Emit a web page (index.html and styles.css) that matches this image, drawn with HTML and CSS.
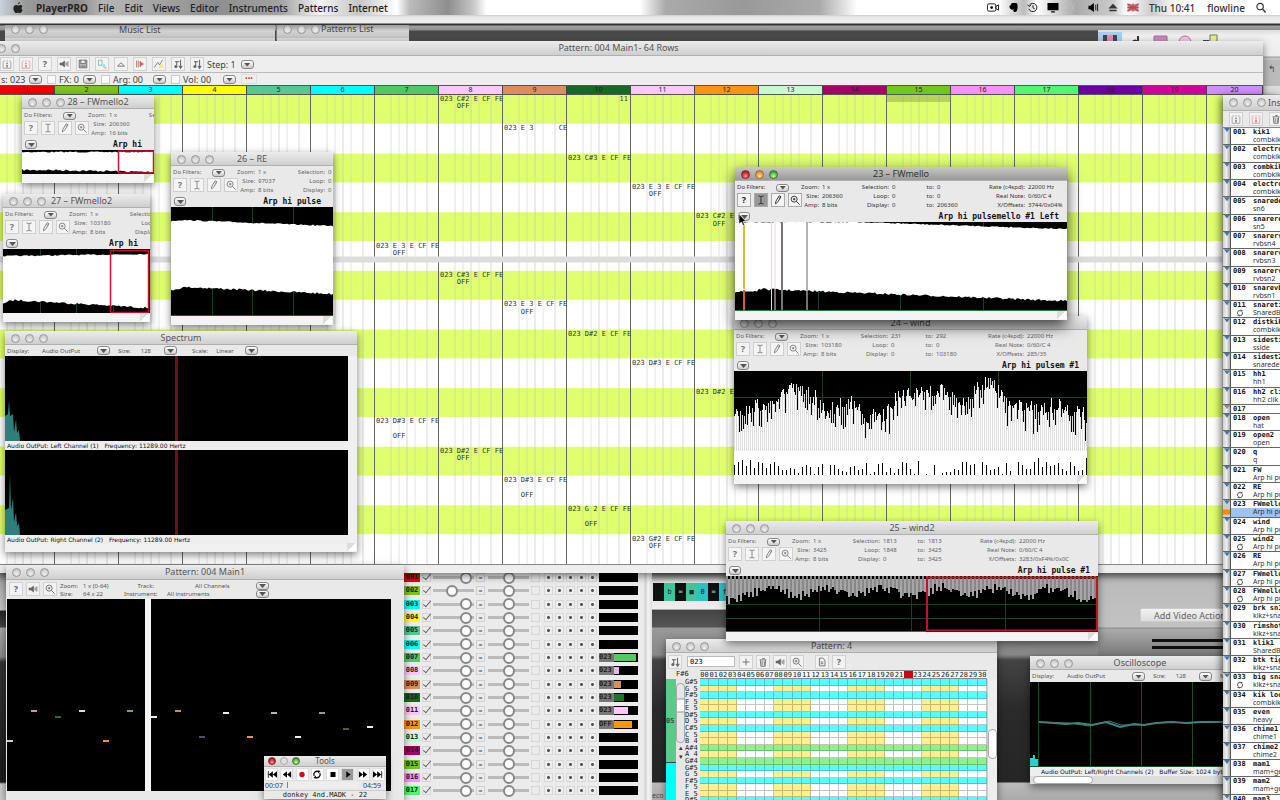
FILE: index.html
```html
<!DOCTYPE html>
<html lang="en">
<head>
<meta charset="utf-8">
<title>PlayerPRO</title>
<link rel="stylesheet" href="styles.css">
</head>
<body>
<svg class="defs" aria-hidden="true">
  <symbol id="i-ibeam" viewBox="0 0 14 14"><path d="M4 2.5h2l1 1 1-1h2M7 3.5v7M4 11.5h2l1-1 1 1h2" fill="none" stroke="currentColor"/></symbol>
  <symbol id="i-pencil" viewBox="0 0 14 14"><path d="M4 11.5l.5-3 4-6.5 2 1.200-4 6.500zM7.500 4l2 1.200" fill="none" stroke="currentColor"/></symbol>
  <symbol id="i-zoom" viewBox="0 0 14 14"><circle cx="6" cy="6" r="3.500" fill="none" stroke="currentColor"/><path d="M8.500 8.500l4 4M6 4.500v3M4.500 6h3" stroke="currentColor" fill="none"/></symbol>
  <symbol id="i-speaker" viewBox="0 0 14 14"><path d="M2 5.500h2.500L8 3v8L4.500 8.500H2z" fill="currentColor"/><path d="M9.500 5v4M11.500 4v6" stroke="currentColor"/></symbol>
  <symbol id="i-trash" viewBox="0 0 14 14"><path d="M3 4.500h8M6 3h3M4 5l.5 7h5l.5-7M6 6v5M8.500 6v5" fill="none" stroke="currentColor"/></symbol>
  <symbol id="i-info" viewBox="0 0 14 14"><path d="M3 3.500h1.500M6 3.500h2M9.500 3.500H11M2.500 4v8h9V4" fill="none" stroke="currentColor" opacity=".6"/><path d="M7 5.500v1.500M7 8v3" stroke="currentColor" stroke-width="1.500"/></symbol>
  <symbol id="i-save" viewBox="0 0 14 14"><path d="M2.500 2.500h9v9h-9zM4.500 2.500v4h5v-4M4 9.500h6" fill="#bbb" stroke="currentColor"/></symbol>
  <symbol id="i-up" viewBox="0 0 14 14"><path d="M3 9.500l4-4 4 4z" fill="none" stroke="currentColor"/></symbol>
  <symbol id="i-note" viewBox="0 0 14 14"><path d="M5.500 10V3.500M3.500 4.500h5M10 2v10M8 9l2 3 2-3" fill="none" stroke="currentColor" stroke-width="1.200"/><circle cx="4.500" cy="10" r="1.800" fill="currentColor"/></symbol>
  <symbol id="i-shapes" viewBox="0 0 14 14"><path d="M3 2.500h4v6H3z" fill="#dff" stroke="#9aa"/><path d="M7.500 7h3v4h-3z" fill="#8ef"/><circle cx="11" cy="11.500" r="1.500" fill="#fb8"/></symbol>
  <symbol id="i-arrows" viewBox="0 0 14 14"><path d="M3 3v8M5 3v8M7 4v6l4-3z" fill="#d67" stroke="#b66"/></symbol>
  <symbol id="i-draw" viewBox="0 0 14 14"><path d="M7 7h5v5H7z" fill="#ee8"/><path d="M1.500 11l4-6 2 3 4-6" fill="none" stroke="#777"/></symbol>
  <symbol id="i-page" viewBox="0 0 14 14"><path d="M4 2.500h4l2.500 2.500v6.500H4zM5.500 7h3M5.500 9h3" fill="none" stroke="currentColor"/></symbol>
  <symbol id="i-plus" viewBox="0 0 14 14"><path d="M7 3v8M3 7h8" stroke="currentColor"/></symbol>
  <symbol id="i-loop" viewBox="0 0 14 14"><path d="M3 9a4.500 4.500 0 0 1 6-6M11 5a4.500 4.500 0 0 1-6 6" fill="none" stroke="currentColor" stroke-width="1.800"/><path d="M7.500 1L12 2 9 5.500zM6.500 13L2 12l3-3.500z" fill="currentColor"/></symbol>
</svg>

<main class="desktop">
  <header class="menubar">
    <svg class="apple" viewBox="0 0 12 12"><path d="M8 0C7.900 1.500 7 2.400 5.900 2.500 5.900 1.200 6.900.2 8 0zM10 6.500c0-1.300 1-1.900 1-1.900-.6-.9-1.500-1.300-2.300-1.300-1 0-1.700.5-2.400.5S4.800 3.400 4 3.400C2.200 3.400 1 5 1 7c0 2.400 1.600 5 3 5 .8 0 1.100-.4 2.100-.4s1.300.4 2 .4c1.200 0 2.200-1.600 2.900-3.100-.8-.4-1-1.300-1-2.400z"/></svg>
    <nav class="menus">
      <button class="app">PlayerPRO</button><button>File</button><button>Edit</button><button>Views</button><button>Editor</button><button>Instruments</button><button>Patterns</button><button>Internet</button>
    </nav>
    <div class="status">
      <svg viewBox="0 0 14 12"><rect x="1" y="2" width="9" height="8" rx="1.500" fill="none" stroke="#111"/><circle cx="5.500" cy="6" r="1.500"/><path d="M10 5l3-2v6l-3-2z" fill="none" stroke="#111"/></svg>
      <svg viewBox="0 0 14 12"><path d="M3 4c2 0 2-3 3-3h4c2 0 2 2 2 4s0 6-3 6c-2 0-2-2-1-3-2 1-5 0-5-4z"/></svg>
      <svg viewBox="0 0 14 12"><path d="M3 3.500a4.500 4.500 0 1 1-.5 4M1 3l2 2 2-2M7 3.500V6.500l2 1" fill="none" stroke="#111"/></svg>
      <svg viewBox="0 0 14 12"><path d="M1 1h12v8H1zM5 10h4v1.500H5z"/></svg>
      <svg viewBox="0 0 14 12"><path d="M5 1l4 9M9 1L5 10" stroke="#bbb"/></svg>
      <svg viewBox="0 0 14 12"><path d="M2 4h2l4-3v10L4 8H2z"/><path d="M10 3v6M12 2v8" stroke="#111"/></svg>
      <svg viewBox="0 0 14 12"><path d="M2 7l5-5 5 5zM3 8.500h8V10H3z" fill="#333"/></svg>
      <svg class="flag" viewBox="0 0 14 12"><path d="M1 2h12v8H1z" fill="#aab"/><path d="M1 2l12 8M13 2L1 10M7 2v8M1 6h12" stroke="#c44" stroke-width="1.500"/></svg>
      <span>Thu 10:41</span><span>flowline</span>
      <svg viewBox="0 0 14 12"><circle cx="6" cy="5" r="3.500" fill="none" stroke="#333" stroke-width="1.300"/><path d="M8.500 7.500l3.500 4" stroke="#333" stroke-width="1.500"/></svg>
    </div>
  </header>
  <div class="backstrip"></div>

  <section class="peek music"><span class="dots"></span><span>Music List</span></section>
  <section class="peek plist"><span class="dots"></span><span>Patterns List</span></section>
  <div class="browser-bar">
    <svg viewBox="0 0 24 10"><path d="M0 0h24v10H0z" fill="#a9cdf0"/><path d="M5 3h14v7H5z" fill="#445"/><path d="M9 3h6v7H9z" fill="#e8a"/></svg>
    <svg viewBox="0 0 24 10"><path d="M8 10q4-5 8 0zM14 4h2v5h-2z" fill="#333"/></svg>
    <svg viewBox="0 0 24 10"><path d="M6 4h13v6H6z" fill="#c8b" stroke="#a69"/></svg>
    <svg viewBox="0 0 24 10"><path d="M6 10a6 6 0 0 1 12 0" fill="#ecd" stroke="#b6a"/></svg>
    <svg viewBox="0 0 24 10"><path d="M5 8h6v2H5z" fill="#444"/><path d="M12 3h7v7h-7z" fill="#ee9" stroke="#585"/></svg>
  </div>
  <div class="side-bar">↰</div>
  <div class="left-back"></div>

  <div class="studio">
    <div class="keys"><i></i><i>b</i><i>=</i><i>■</i><i>0</i><i>=</i><i>f</i></div>
    <div class="studio-dark"><span>eco</span></div>
  </div>
  <div class="video">
    <button>Add Video Action</button>
    <div class="video-lines"></div>
  </div>

  <section class="mixer" id="mixer" aria-label="Track mixer"></section>

  <section class="win pat4">
    <div class="title"><span class="dots"></span>Pattern: 4</div>
    <div class="p4tools">
      <button aria-label="Note"><svg><use href="#i-note"/></svg></button>
      <input aria-label="Instrument" value="023">
      <button aria-label="Add"><svg><use href="#i-plus"/></svg></button>
      <button aria-label="Delete"><svg><use href="#i-trash"/></svg></button>
      <button aria-label="Play"><svg><use href="#i-speaker"/></svg></button>
      <button aria-label="Zoom"><svg><use href="#i-zoom"/></svg></button>
      <button class="later" aria-label="Page"><svg><use href="#i-page"/></svg></button>
      <button>?</button>
    </div>
    <div class="p4head"><span class="p4key">F#6</span><div class="p4nums" id="p4nums"></div></div>
    <div class="p4body">
      <div class="p4tracks"><b>05</b><i></i></div>
      <div class="p4scroll"><span></span><i>▴</i><i>▾</i></div>
      <div class="p4notes" id="p4notes"></div>
      <div class="p4grid" id="p4grid"></div>
      <div class="p4right"><span></span></div>
    </div>
  </section>

  <section class="win osc">
    <div class="title"><span class="dots"></span>Oscilloscope</div>
    <div class="options"><span>Display:</span><span class="opt">Audio OutPut</span><span class="dd"><select aria-label="Display"></select></span><span>Size:</span><span class="num">128</span><span class="dd"><select aria-label="Size"></select></span><span>Mode:</span></div>
    <svg class="osc-view" viewBox="0 0 220 85" preserveAspectRatio="none"><rect width="220" height="85"/><path d="M8.500 0v85M60.500 0v85M111.500 0v85M162.500 0v85M0 84.500h220" stroke="#174f22"/><path d="M0 84V76h3v-3h2v4h3v7z" fill="#2bd0cc"/><path d="M9 40l15 1 12 1 12-1 14 2 14-3 14 5 14-3 10 1 12-2 16-1 14 1 14-1h24" fill="none" stroke="#2e8c86" stroke-width="2"/><path d="M9 40l30 1 20 3 20-5 12 4 20 0 16-2 10-1 26 1" fill="none" stroke="#5c7371"/></svg>
    <div class="caption osc-cap">Audio OutPut: Left/Right Channels (2) &nbsp; Buffer Size: 1024 bytes</div>
    <div class="osc-scroll"><span></span></div>
  </section>

  <section class="win pattern">
    <div class="title"><span class="dots"></span>Pattern: 004 Main1- 64 Rows</div>
    <div class="tools">
      <button aria-label="Info"><svg><use href="#i-info"/></svg></button>
      <button class="red" aria-label="Record"><svg><use href="#i-info"/></svg></button>
      <button>?</button>
      <button aria-label="Sound"><svg><use href="#i-speaker"/></svg></button>
      <button aria-label="Save"><svg><use href="#i-save"/></svg></button>
      <button aria-label="Shapes"><svg><use href="#i-shapes"/></svg></button>
      <button aria-label="Up"><svg><use href="#i-up"/></svg></button>
      <button aria-label="Follow"><svg><use href="#i-arrows"/></svg></button>
      <button aria-label="Draw"><svg><use href="#i-draw"/></svg></button>
      <button aria-label="Note up"><svg><use href="#i-note"/></svg></button>
      <button class="flat" aria-label="Note down"><svg><use href="#i-note"/></svg></button>
      <span>Step: 1</span><span class="dd"><select aria-label="Step"></select></span>
    </div>
    <div class="fields">
      <span class="f1">s: 023</span><span class="dd"><select aria-label="Ins"></select></span>
      <label><input type="checkbox"><span class="f2">FX: 0</span></label><span class="dd"><select aria-label="FX"></select></span>
      <label><input type="checkbox"><span class="f3">Arg: 00</span></label><span class="dd"><select aria-label="Arg"></select></span>
      <label><input type="checkbox"><span class="f3">Vol: 00</span></label><span class="dd"><select aria-label="Vol"></select></span>
      <button class="rec">•••</button>
    </div>
    <div class="tracks" id="tracks"></div>
    <div class="grid" id="grid"></div>
    <div class="foot"></div>
  </section>

  <div id="samples"></div>

  <section class="win spectrum">
    <div class="title"><span class="dots"></span>Spectrum</div>
    <div class="options"><span>Display:</span><span class="opt">Audio OutPut</span><span class="dd"><select aria-label="Display"></select></span><span>Size:</span><span class="num">128</span><span class="dd"><select aria-label="Size"></select></span><span class="scale">Scale:</span><span class="lin">Linear</span><span class="dd"><select aria-label="Scale"></select></span></div>
    <div class="spec-body">
      <svg viewBox="0 0 342 85" preserveAspectRatio="none"><rect width="342" height="85"/><path d="M0 85V60l3-2 1-14 1 16 3-2 1 18 2-13 1 14 2-3 1 11h327z" fill="#2d7f79"/><path d="M171 0v85" stroke="#6d1018" stroke-width="3"/></svg>
      <div class="caption">Audio OutPut: Left Channel (1) &nbsp; Frequency: 11289.00 Hertz</div>
      <svg viewBox="0 0 342 85" preserveAspectRatio="none"><rect width="342" height="85"/><path d="M0 85V60l4-2 1-34 1 36 2-12 1 24 2-10 1 14 2-3 1 12h327z" fill="#2d7f79"/><path d="M171 0v85" stroke="#6d1018" stroke-width="3"/></svg>
      <div class="caption">Audio OutPut: Right Channel (2) &nbsp; Frequency: 11289.00 Hertz</div>
    </div>
  </section>

  <section class="win instr">
    <div class="title"><span class="dots"></span><span>Instruments List</span></div>
    <div class="itools"><button aria-label="Info"><svg><use href="#i-info"/></svg></button><button class="red" aria-label="Load"><svg><use href="#i-info"/></svg></button><button aria-label="Delete"><svg><use href="#i-trash"/></svg></button></div>
    <div class="ilist" id="ilist"></div>
  </section>

  <section class="win roll">
    <div class="title"><span class="dots"></span>Pattern: 004 Main1</div>
    <div class="rollinfo">
      <button>?</button><button aria-label="Sound"><svg><use href="#i-speaker"/></svg></button><button aria-label="Zoom"><svg><use href="#i-zoom"/></svg></button>
      <div class="rollmeta">
        <span>Zoom:</span><span>1 x (0-64)</span><span class="r">Track:</span><span class="m chan">All Channels</span><span class="dd"><select aria-label="Track"></select></span>
        <span>Size:</span><span>64 x 22</span><span class="r">Instrument:</span><span class="m">All instruments</span><span class="dd"><select aria-label="Instrument"></select></span>
      </div>
    </div>
    <svg class="rollview" id="roll" viewBox="0 0 384 192" preserveAspectRatio="none"></svg>
  </section>

  <section class="win toolswin">
    <div class="title"><span class="dots live"></span>Tools</div>
    <div class="transport">
      <button aria-label="Start"><svg viewBox="0 0 12 12"><path d="M1 2h1v8H1zM7 2v8L2 6zM12 2v8L7 6z"/></svg></button>
      <button aria-label="Back"><svg viewBox="0 0 12 12"><path d="M6 2v8L1 6zM11 2v8L6 6z"/></svg></button>
      <button aria-label="Record"><svg viewBox="0 0 12 12"><circle cx="6" cy="6" r="3.200" fill="#e00012"/></svg></button>
      <button aria-label="Loop"><svg><use href="#i-loop"/></svg></button>
      <button aria-label="Stop"><svg viewBox="0 0 12 12"><path d="M3 3h6v6H3z"/></svg></button>
      <button class="on" aria-label="Play"><svg viewBox="0 0 12 12"><path d="M4 2l5 4-5 4z"/></svg></button>
      <button aria-label="Forward"><svg viewBox="0 0 12 12"><path d="M1 2l5 4-5 4zM6 2l5 4-5 4z"/></svg></button>
      <button aria-label="End"><svg viewBox="0 0 12 12"><path d="M0 2l5 4-5 4zM5 2l5 4-5 4zM10 2h1v8h-1z"/></svg></button>
    </div>
    <div class="time"><span>00:07</span><i></i><span>04:59</span></div>
    <div class="song">donkey 4nd.MADK - 22</div>
  </section>
</main>
<script src="app.js"></script>
</body>
</html>
```
FILE: styles.css
```css
*, *::before, *::after { box-sizing: border-box; }
body { margin: 0; font-family: "Noto Sans", "Open Sans", sans-serif; color: #444; }
button { font: inherit; color: inherit; padding: 0; border: 0; background: none; }
.defs { position: absolute; width: 0; height: 0; }
.desktop { position: relative; height: 100vh; overflow: hidden; background: #9a9a9a; white-space: nowrap; }

/* menu bar */
.menubar { height: 15px; display: flex; align-items: center; justify-content: space-between; padding: 0 12px; font-size: 10px; font-weight: 500; color: #222; background: linear-gradient(90deg, #c9d3dc 0, #999 2%, #8a8a8a 6%, #b5b5b5 8%, #aaa 11%, #8e8e8e 17%, #a3a3a3 22%, #f4f4f4 25%, #c6c6c6 28%, #fff 31%, #bbb 32%, #8e8e8e 35%, #c8c8c8 37%, #fff 38%, #fff 50%, #aaa 52%, #999 58%, #aaa 64%, #fff 67%, #fff 78%, #bbb 80%, #fff 81%, #aaa 84%, #ccc 87%, #fff 88%, #ccc 90%, #fff 92%); }
.menus, .status { display: flex; align-items: center; gap: 10px; }
.menus { flex: 1; padding-left: 12px; }
.app { font-weight: 700; }
.apple { width: 12px; height: 11px; fill: #222; }
.status { gap: 6px; }
.status svg { width: 14px; height: 11px; }
.status span { margin: 0 3px 0 3px; color: #333; }
.backstrip { height: 27px; background: linear-gradient(#ccc 0, #e9e9e9 2px, #ececec 8px, #333 9px, #333 10px, #a2a2a2 11px, #8d8d8d 15px, #484848 16px, #4d4d4d 27px); }
.peek { position: absolute; top: 25px; height: 17px; background: linear-gradient(#999, #d2d2d2 6px, #c6c6c6 12px, #aaa 12px, #ddd 13px); font-size: 9px; line-height: 9px; }
.music { left: 5px; width: 270px; padding-left: 114px; }
.plist { left: 276px; width: 133px; padding-left: 44px; border-left: 1px solid #777; line-height: 7px; }

.dots { position: absolute; left: 6px; top: 3px; width: 9px; height: 9px; border-radius: 50%; border: 1px solid #999; background: radial-gradient(circle at 50% 70%, #eee, #bbb); }
.dots::before, .dots::after { content: ""; position: absolute; left: 13px; top: -1px; width: 9px; height: 9px; border-radius: 50%; border: 1px solid #999; background: radial-gradient(circle at 50% 70%, #eee, #bbb); }
.dots::after { left: 27px; }
.peek .dots { top: 0; }
.live { border-color: #822; background: radial-gradient(circle at 50% 75%, #f99, #c1202c 60%); }
.live::before { border-color: #a62; background: radial-gradient(circle at 50% 75%, #fe9, #dd8433 70%); }
.live::after { border-color: #373; background: radial-gradient(circle at 50% 75%, #cf9, #4b9b3b 70%); }
.toolswin .live::before { border-color: #aaa; background: #ddd; }

.browser-bar { position: absolute; top: 30px; left: 1098px; right: 0; height: 65px; display: flex; align-items: flex-start; gap: 1px; padding-top: 2px; background: linear-gradient(#ddd, #f1f1f1 6px, #eee 26px, #999 27px, #c6c6c6 28px, #bbb); }
.browser-bar svg { width: 24px; height: 10px; }
.side-bar { position: absolute; top: 60px; right: 0; width: 16px; height: 34px; font-size: 9px; padding: 2px 4px; background: #bbb; border-bottom: 8px solid #ddd; }
.left-back { position: absolute; left: 0; top: 572px; bottom: 0; width: 8px; background: linear-gradient(#777 0, #aaa 10px, #ccc 38px, #222 39px, #444 55px, #aaa 56px, #888 85px, #333 90px, #1a1a1a 210px, #ccc 212px); }

/* windows */
.win { position: absolute; display: flex; flex-direction: column; background: #e9e9e9; box-shadow: 0 3px 8px rgba(0, 0, 0, .5); }
.title { position: relative; flex: none; height: 14px; line-height: 14px; font-size: 9px; text-align: center; color: #555; background: linear-gradient(#ececec, #cfcfcf); border-bottom: 1px solid #b0b0b0; overflow: hidden; }
.dd { position: relative; flex: none; display: inline-block; width: 13px; height: 9px; border: 1px solid #888; border-radius: 3px; background: linear-gradient(#fff, #ccc); }
.dd select { appearance: none; position: absolute; inset: 0; width: 100%; height: 100%; padding: 0; border: 0; opacity: 0; }
.dd::after { content: ""; position: absolute; left: 2px; top: 2px; width: 7px; height: 4px; background: #555; clip-path: polygon(0 0, 100% 0, 50% 100%); }
.caption { flex: none; height: 9px; line-height: 9px; padding-left: 2px; font-family: "DejaVu Sans", sans-serif; font-size: 6px; color: #111; background: #eee; overflow: hidden; }
.options { display: flex; align-items: center; height: 11px; padding-left: 2px; gap: 8px; font-size: 6px; color: #555; overflow: hidden; }
.opt { width: 52px; padding-left: 5px; }
.num { padding: 0 5px 0 2px; }
.scale { margin-left: 7px; }
.lin { width: 20px; margin-right: 1px; }

/* main pattern window */
.pattern { left: 0; right: 17px; top: 41px; }
.pattern .title { height: 15px; line-height: 14px; padding-right: 26px; }
.pattern .dots { left: -3px; }
.pattern .dots::after { display: none; }
.tools { display: flex; align-items: center; height: 17px; gap: 5px; font-size: 9px; border-bottom: 1px solid #bbb; background: #eee; }
.tools button, .p4tools button, .itools button, .rollinfo button { flex: none; width: 14px; height: 14px; display: grid; place-items: center; font-size: 9px; line-height: 12px; font-weight: 700; border: 1px solid #d2d2d2; background: #f2f2f2; color: #666; }
.tools svg, .p4tools svg, .itools svg, .rollinfo svg { width: 12px; height: 12px; }
.tools .red, .itools .red { color: #c66; }
.tools .flat { margin-right: -2px; }
.fields { display: flex; align-items: center; height: 12px; font-size: 9px; line-height: 11px; padding-left: 1px; background: #eee; }
.fields .dd, .fields label { margin-right: 5px; }
.fields label { display: flex; align-items: center; gap: 3px; margin-right: 0; }
.fields input { appearance: none; width: 9px; height: 9px; margin: 0; border: 1px solid #ccc; background: #fafafa; }
.f1 { width: 28px; }
.f2 { width: 24px; }
.f3 { width: 40px; }
.rec { width: 16px; height: 10px; line-height: 8px; font-size: 7px; color: #c33; border: 1px solid #ddd; }
.tracks, .grid { display: grid; grid-template-columns: 55px repeat(18, 64px) 1fr; }
.tracks { height: 10px; border: solid #555; border-width: 1px 0; }
.tracks span { font-size: 7px; line-height: 8px; text-align: center; color: #222; border-right: 1px solid #444; }
.grid { height: 469px; grid-template-rows: repeat(64, 1fr); position: relative; background:
  linear-gradient(transparent 161px, #ddd 162px, #ddd 167px, transparent 168px),
  repeating-linear-gradient(90deg, transparent 0, transparent 15px, rgba(190,190,200,.25) 15px, rgba(190,190,200,.25) 17px, transparent 17px, transparent 23px, rgba(190,190,200,.2) 23px, rgba(190,190,200,.2) 25px, transparent 25px, transparent 31px, rgba(190,190,200,.3) 31px, rgba(190,190,200,.3) 33px, transparent 33px, transparent 39px, rgba(190,190,200,.2) 39px, rgba(190,190,200,.2) 41px, transparent 41px, transparent 51px, rgba(190,190,200,.3) 51px, rgba(190,190,200,.3) 53px, transparent 53px, transparent 63px, #666 63px, #666 64px) -9px 0 / 1300px 100%,
  linear-gradient(#dfff6c 50%, #fff 50%) 0 0 / 100% 12.5%; }
.cell { height: 0; font: 7px/8px "DejaVu Sans Mono", "Liberation Mono", monospace; color: #333; padding-left: 1px; white-space: pre; }
.cell.end { text-align: right; padding-right: 3px; }
.playing { background: rgba(120, 150, 60, .4); }
.foot { height: 9px; background: #eee; border-top: 1px solid #888; }

/* sample editors */
.s28 { left: 22px; top: 95px; width: 132px; }
.s27 { left: 3px; top: 194px; width: 147px; }
.s26 { left: 171px; top: 152px; width: 162px; }
.s24 { left: 734px; top: 316px; width: 353px; }
.s23 { left: 735px; top: 167px; width: 332px; box-shadow: 0 6px 14px rgba(0, 0, 0, .75); }
.s25 { left: 726px; top: 521px; width: 372px; }
.s28 .title { padding-left: 20px; }
.s27 .title { padding-left: 10px; }
.s23 .title { background: linear-gradient(#c8c8c8, #999); color: #333; }
.info { display: grid; grid-template-columns: 61px 18px 36px 28px 32px 7px 36px 49px 60px; column-gap: 3px; height: 29px; padding: 2px 0 0 2px; font-size: 6px; line-height: 9px; overflow: hidden; color: #666; }
.s23 .info { color: #333; }
.lab { text-align: right; display: flex; flex-direction: column; align-items: flex-end; }
.val { display: flex; flex-direction: column; }
.filters { display: flex; align-items: center; height: 9px; gap: 11px; }
.filters .dd { height: 8px; }
.filters .dd::after { top: 1px; }
.ibtns { display: flex; gap: 3px; padding-top: 1px; }
.ibtns button { flex: none; width: 14px; height: 14px; display: grid; place-items: center; font-size: 9px; font-weight: 700; line-height: 12px; border: 1px solid #d0d0d0; background: #f4f4f4; color: #777; }
.s23 .ibtns button { color: #222; border-color: #aaa; }
.s23 .ibtns .pick { background: #999; }
.ibtns svg { width: 12px; height: 12px; }
.name { display: flex; align-items: flex-end; justify-content: space-between; height: 12px; padding: 0 8px 1px 3px; font: 700 8px/9px "DejaVu Sans Mono", monospace; color: #111; }
.name .dd { width: 12px; }
.s28 .name, .s27 .name, .s26 .name { padding-right: 12px; }
.view { display: block; width: 100%; }
.grow { position: relative; height: 9px; background: #f4f4f4; }
.grow::after, .spectrum::after { content: ""; position: absolute; right: 1px; bottom: 1px; width: 9px; height: 8px; background: linear-gradient(135deg, #ddd 50%, #fff 50%); }
.pointer { position: absolute; left: 3px; top: 46px; width: 9px; height: 13px; }

/* spectrum */
.spectrum { left: 5px; top: 331px; width: 352px; padding-bottom: 8px; background: #f0f0f0; }
.spectrum .options { background: #e9e9e9; }
.spec-body { padding-right: 9px; }
.spec-body svg { display: block; width: 100%; height: 85px; }

/* piano roll */
.roll { left: 6px; top: 565px; width: 398px; bottom: 0; }
.roll .title { height: 15px; }
.rollinfo { display: flex; gap: 3px; padding: 2px 0 0 3px; height: 19px; font-size: 6px; color: #555; }
.rollmeta { display: grid; grid-template-columns: 20px 38px 30px 96px 14px; grid-auto-rows: 8px; line-height: 8px; column-gap: 3px; }
.rollmeta .dd { height: 8px; }
.rollmeta .dd::after { top: 1px; }
.rollmeta .r { text-align: right; }
.rollmeta .m { padding-left: 10px; }
.rollmeta .chan { padding-left: 38px; }
.rollview { width: calc(100% - 14px); height: 192px; margin-left: 1px; }
.toolswin { left: 264px; top: 756px; width: 122px; }
.toolswin .title { height: 11px; line-height: 10px; font-size: 8px; }
.toolswin .dots { top: 1px; left: 4px; width: 8px; height: 8px; }
.toolswin .dots::before, .toolswin .dots::after { width: 8px; height: 8px; left: 11px; }
.toolswin .dots::after { left: 23px; }
.transport { display: flex; justify-content: space-between; padding: 1px; }
.transport button { width: 13px; height: 13px; display: grid; place-items: center; background: #fff; border: 1px solid #ddd; }
.transport .on { background: #999; }
.transport svg { width: 10px; height: 11px; color: #111; }
.time { display: flex; justify-content: space-between; gap: 4px; font-size: 7px; line-height: 8px; padding: 0 5px 0 1px; }
.time i { flex: 1; height: 6px; border: solid #789; border-width: 0 0 0 1px; background: #eee; }
.song { font: 7px/8px "DejaVu Sans Mono", monospace; text-align: center; color: #222; border-top: 1px solid #ccc; }

/* mixer */
.mixer { position: absolute; left: 403px; top: 571px; width: 249px; height: 240px; display: grid; grid-template-rows: repeat(18, 1fr); background: linear-gradient(90deg, #ebebeb 241px, #ccc 242px, #f4f4f4 245px, #ddd); }
.strip { display: grid; grid-template-columns: 16px 9px 41px 10px 41px 11px 53px 39px; column-gap: 2px; align-items: center; padding-left: 1px; }
.strip b { font: 700 7px/9px "DejaVu Sans Mono", monospace; color: #222; text-align: center; }
.strip input { appearance: none; margin: 0; }
.strip .ck { position: relative; width: 9px; height: 9px; border: 1px solid #d6d6d6; }
.strip .ck:checked::after { content: ""; position: absolute; left: 2px; top: -2px; width: 4px; height: 8px; border: solid #666; border-width: 0 1px 1px 0; transform: rotate(40deg); }
.strip .rg { width: 100%; height: 12px; background: linear-gradient(#bbb, #bbb) 0 50% / 100% 3px no-repeat; }
.rg::-webkit-slider-thumb { appearance: none; box-sizing: border-box; width: 12px; height: 12px; border-radius: 50%; border: 2px solid #888; background: #fafafa; }
.strip .mute { width: 9px; height: 9px; line-height: 5px; font-size: 7px; border: 1px solid #d0d0d0; }
.fx { display: flex; gap: 2px; }
.fx button { width: 9px; height: 9px; border: 1px solid #d8d8d8; background: radial-gradient(circle, #555 1px, #eee 2px); }
.meter { height: 9px; background: #000; display: flex; font: 700 7px/9px "DejaVu Sans Mono", monospace; color: #222; }
.meter span { width: 15px; background: #777; }
.meter i { height: 7px; margin-top: 1px; }

/* studio behind */
.studio { position: absolute; left: 652px; right: 0; top: 572px; bottom: 0; background: #8d8d8d; }
.keys { display: flex; height: 38px; padding: 11px 0 8px 1px; border-bottom: 1px solid #aaa; background: linear-gradient(#555, #ddd 10px, #eee); }
.keys i { width: 11px; font: 7px/18px "DejaVu Sans Mono", monospace; text-align: center; color: #ccc; background: #111; }
.keys i:nth-child(2), .keys i:nth-child(4) { background: #43c39b; color: #123; }
.keys i:nth-child(5), .keys i:nth-child(7) { background: #2cc3c3; color: #123; }
.studio-dark { height: 190px; display: flex; align-items: flex-end; font-size: 7px; background: linear-gradient(#444 0, #555 17px, #999 18px, #888 45px, #444 50px, #2a2a2a 100px, #262626 172px, #bbb 173px, #aaa); }
.video { position: absolute; left: 1098px; right: 0; top: 572px; height: 85px; padding: 30px 0 0 42px; background: linear-gradient(#888, #bbb 8px, #c2c2c2 55px, #888 56px, #aaa 57px, #777); }
.video button { width: 110px; height: 14px; padding-left: 13px; text-align: left; font-size: 9px; line-height: 13px; color: #666; border: 1px solid #ccc; border-radius: 2px; background: linear-gradient(#f2f2f2, #ddd); }
.video-lines { height: 10px; margin: 15px 0 0 12px; border: solid #111; border-width: 3px 0; }

/* pattern 4 grid editor */
.pat4 { left: 666px; top: 639px; width: 331px; bottom: 0; overflow: hidden; }
.p4tools { flex: none; display: flex; align-items: center; gap: 3px; height: 17px; padding-left: 2px; }
.p4tools input { width: 48px; height: 11px; margin: 0 1px 0 2px; padding: 0 2px; border: 1px solid #bbb; font: 7px "DejaVu Sans Mono", monospace; background: #fff; }
.p4tools .later { margin-left: 8px; }
.p4head { flex: none; display: flex; height: 9px; font: 7px/8px "DejaVu Sans Mono", monospace; color: #222; }
.p4key { width: 34px; padding-left: 10px; }
.p4nums { flex: 1; margin-right: 10px; display: grid; grid-template-columns: repeat(31, 1fr); border: solid #888; border-width: 1px 0; line-height: 8px; text-align: center; background: #f6f6f6; }
.p4nums span { width: 9px; overflow: hidden; }
.p4nums .now { background: #d80010; color: transparent; }
.p4body { flex: none; display: flex; height: 125px; }
.p4tracks { width: 10px; font: 700 7px/84px "DejaVu Sans Mono", monospace; background: #0ff; }
.p4tracks b { display: block; height: 84px; background: #5c8; border-bottom: 1px solid #444; }
.p4scroll { width: 9px; font-size: 7px; line-height: 9px; color: #333; text-align: center; background: #e6e6e6; }
.p4scroll i { display: block; font-style: normal; }
.p4scroll span { display: block; height: 60px; margin-top: 4px; border: 1px solid #aaa; border-radius: 4px; background: linear-gradient(transparent 14px, #999 15px, #fff 16px, #fff 27px, #999 28px, transparent 29px); }
.p4notes { width: 15px; display: grid; grid-template-rows: repeat(19, 1fr); font: 7px/7px "DejaVu Sans Mono", monospace; color: #222; }
.p4notes span { height: 0; white-space: pre; }
.p4grid { flex: 1; display: grid; grid-template: repeat(19, 1fr) / repeat(31, 1fr); }
.p4grid i { border: solid rgba(60, 60, 60, .3); border-width: 0 1px 1px 0; background: #fff; }
.p4grid .y { background: #ffef8e; }
.p4grid .c { background: #5ff; }
.p4grid .g { background: #8df28c; }
.p4right { width: 10px; border-left: 1px solid #ccc; background: #eee; }
.p4right span { display: block; height: 30px; margin: 50px 0 0; border: 1px solid #aaa; border-radius: 4px; background: #fff; }

/* oscilloscope */
.osc { left: 1030px; right: 30px; top: 656px; }
.osc .options { height: 12px; }
.osc .opt { width: 62px; }
.osc-view { height: 85px; width: 100%; }
.osc-cap { padding-left: 11px; }
.osc-scroll { height: 8px; background: #ddd; }
.osc-scroll span { display: block; width: 60px; height: 8px; margin-left: 3px; border: 1px solid #aaa; border-radius: 4px; background: #fff; }

/* instrument list */
.instr { right: 0; top: 95px; bottom: 0; width: 57px; overflow: hidden; box-shadow: -2px 2px 8px rgba(0, 0, 0, .6); }
.instr .title { flex: none; height: 16px; line-height: 16px; text-align: left; padding-left: 45px; }
.itools { flex: none; display: flex; gap: 6px; height: 17px; padding: 1px 0 0 6px; border-bottom: 1px solid #888; }
.ilist { flex: none; height: 684px; display: grid; }
.irow { display: grid; grid-template-columns: 8px 1fr; border-bottom: 1px solid #666; background: #fff; overflow: hidden; min-height: 0; }
.irow .tab { position: relative; border-right: 1px solid #555; background: linear-gradient(90deg, #ccc, #eee, #aaa); }
.irow .tab::before { content: ""; position: absolute; left: 1px; top: 0; width: 6px; height: 4px; background: #4676a5; clip-path: polygon(0 0, 100% 0, 50% 100%); }
.irow.plain .tab::before { background: #888; }
.ibody { display: grid; grid-template: 8px 8px / 18px 1fr; column-gap: 2px; padding-left: 2px; font: 700 7px/9px "DejaVu Sans Mono", monospace; color: #111; }
.ibody small { font: 7px/8px "Noto Sans", sans-serif; grid-column: 2; color: #333; }
.ibody svg { grid-area: 2 / 1; width: 8px; height: 8px; margin-left: 3px; color: #666; }
.irow.sel .ibody { background: linear-gradient(#fff 8px, #9cc4f2 8px); }
.irow.sel .tab { background: linear-gradient(#ccc 9px, #f08a10 10px, #f08a10 14px, #ccc 15px); }
```
FILE: app.js
```js
const $ = (id) => document.getElementById(id);
let seed = 7;
const rnd = () => { seed = (seed * 16807) % 2147483647; return seed / 2147483647; };
const dd = (label) => `<span class="dd"><select aria-label="${label}"></select></span>`;

/* track header */
const colors = ['#f00000', '#7cc41e', '#0ff', '#ff0', '#55c795', '#0ff', '#4fca5c', '#fbc8fb', '#d98e5e', '#176820', '#fbc8fb', '#fb9413', '#c8f8d2', '#a80068', '#70c81c', '#fb90fb', '#52f86c', '#6a00a0', '#d4009c', '#d090fb'];
$('tracks').innerHTML = colors.map((c, i) => `<span style="background:${c}">${i + 1}</span>`).join('');

/* pattern events: track, row, text */
const events = [[8, 0, '023 C#2 E CF FE'], [8, 1, '    OFF'], [9, 4, '023 E 3      CE'], [10, 8, '023 C#3 E CF FE'],
  [11, 12, '023 E 3 E CF FE'], [11, 13, '    OFF'], [12, 16, '023 C#2 E CF FE'], [12, 17, '    OFF'], [7, 20, '023 E 3 E CF FE'], [7, 21, '    OFF'],
  [8, 24, '023 C#3 E CF FE'], [8, 25, '    OFF'], [9, 28, '023 E 3 E CF FE'], [9, 29, '    OFF'], [10, 32, '023 D#2 E CF FE'], [11, 36, '023 D#3 E CF FE'],
  [12, 40, '023 D#2 E CF FE'], [7, 44, '023 D#3 E CF FE'], [7, 46, '    OFF'], [8, 48, '023 D#2 E CF FE'], [8, 49, '    OFF'],
  [9, 52, '023 D#3 E CF FE'], [9, 54, '    OFF'], [10, 56, '023 G 2 E CF FE'], [10, 58, '    OFF'], [11, 60, '023 G#2 E CF FE'], [11, 61, '    OFF']];
$('grid').innerHTML = events.map(([t, r, s]) => `<span class="cell" style="grid-area:${r + 1}/${t}">${s}</span>`).join('') +
  '<span class="cell end" style="grid-area:1/10">11</span><span class="playing" style="grid-area:1/15"></span>';

/* sample editors */
const level = (pts, x) => {
  let k = 1;
  while (k < pts.length - 1 && pts[k][0] < x) k++;
  const [x0, y0] = pts[k - 1], [x1, y1] = pts[k];
  return y0 + (y1 - y0) * (x - x0) / (x1 - x0);
};
function edge(w, pts, jitter) {
  let d = '';
  for (let x = 0; x <= w; x += 2) d += `L${x} ${(level(pts, x) + (rnd() - .5) * jitter).toFixed(1)}`;
  return d;
}
const body = (w, top, bot) => {
  const reversed = edge(w, bot, 2).split('L').slice(1).reverse().map((p) => 'L' + p).join('');
  return `<path fill="#fff" d="M0 ${top[0][1]}${edge(w, top, 1.2)}${reversed}z"/>`;
};
const vlines = (xs, h) => `<path d="${xs.map((x) => `M${x} 0v${h}`).join('')}" stroke="#16401c"/>`;

function wind24() {
  const top = [[0, 38], [38, 30], [52, 16], [72, 16], [92, 36], [115, 28], [130, 42], [148, 44], [166, 20], [205, 16], [225, 24], [235, 28], [245, 10], [258, 10], [275, 32], [300, 36], [320, 32], [353, 44]];
  let d = '', g = '', b = '';
  for (let x = 0; x < 353; x += 2) {
    const y = level(top, x);
    g += `M${x + .5} ${(y + rnd() * 14 - 4).toFixed(0)}V80`;
    d += `M${x + 1.5} ${(y + rnd() * 34 - 6).toFixed(0)}V104`;
    if (x % 4 === 0) b += `M${x + .5} ${(104 - (rnd() * 14 + (x > 290 || x < 30 ? 4 : 0))).toFixed(0)}V104`;
  }
  return `<path d="M0 70H353V104H0z" fill="#fff"/><path d="${g}" stroke="#ddd"/><path d="${d}" stroke="#fff"/><path d="${b}" stroke="#000"/>`;
}
function wind25() {
  let a = '', b = '';
  for (let x = 0; x < 372; x += 4) {
    const extra = x < 15 ? 8 : x > 350 ? 9 : 4 * Math.sin(x / 9);
    a += `M${x + 1} 0V${(11 + rnd() * 6 + extra).toFixed(0)}`;
    b += `M${x + 3} 3V${(13 + rnd() * 8 + extra).toFixed(0)}`;
  }
  return `<path d="M0 28.500H372M0 42.500H372" stroke="#17451c"/><path d="${a}" stroke="#888" stroke-width="2"/><path d="${b}" stroke="#ddd" stroke-width="1.500"/>`;
}
const windows = [
  { n: 28, t: '28 - FWmello2', zoom: ['1 x', '206360', '16 bits'], sel: ['0', '0', '0'], to: [], rate: [], name: 'Arp hi', w: 132, h: 24,
    art: body(132, [[0, 2], [132, 2]], [[0, 20], [30, 20], [132, 22]]) + '<path d="M96.500 1h35v22h-35z" fill="none" stroke="#d01028" stroke-width="1.500"/>' },
  { n: 27, t: '27 - FWmello2', zoom: ['1 x', '103180', '8 bits'], sel: ['0', '0', '0'], to: [], rate: [], name: 'Arp hi', w: 147, h: 64,
    art: vlines([37.5, 73.5, 110.5], 64) + body(147, [[0, 7], [147, 5]], [[0, 54], [12, 51], [147, 59]]) + '<path d="M107.500 1.500h38v62h-38z" fill="none" stroke="#d01028" stroke-width="1.500"/>' },
  { n: 26, t: '26 - RE', zoom: ['1 x', '97037', '8 bits'], sel: ['0', '0', '0'], to: [], rate: [], name: 'Arp hi pulse', w: 162, h: 109,
    art: vlines([41.5, 81.5, 122.5], 109) + body(162, [[0, 14], [10, 13], [162, 19]], [[0, 83], [15, 80], [162, 87]]) + '<path d="M0 108.500h162" stroke="#1b5a2a"/>' },
  { n: 24, t: '24 -  wind', zoom: ['1 x', '103180', '8 bits'], sel: ['231', '0', '0'], to: ['292', '0', '103180'], rate: ['22000 Hz', '0/60/C 4', '285/35'], name: 'Arp hi pulsem #1', w: 353, h: 104,
    art: vlines([88.5, 176.5, 264.5], 104) + '<path d="M0 26.500H353" stroke="#16401c"/>' + wind24() },
  { n: 23, t: '23 - FWmello', zoom: ['1 x', '206360', '8 bits'], sel: ['0', '0', '0'], to: ['0', '0', '206360'], rate: ['22000 Hz', '0/60/C 4', '3744/0x04%'], name: 'Arp hi pulsemello #1 Left', w: 332, h: 89, live: true,
    art: vlines([83.5, 165.5, 248.5], 89) + body(332, [[0, 0], [120, 0], [332, 7]], [[0, 70], [22, 69], [24, 67], [332, 79]]) + '<path d="M9 3v64" stroke="#e3bd2c" stroke-width="2"/><path d="M9 68v20" stroke="#e35a1c" stroke-width="2"/><path d="M36.500 0v88M40 0v88" stroke="#e9d9e1"/><path d="M47 0v88" stroke="#777" stroke-width="2"/><path d="M72 0v88" stroke="#999" stroke-width="1.500"/><path d="M0 88.500h332" stroke="#2b7b38"/>' },
  { n: 25, t: '25 - wind2', zoom: ['1 x', '3425', '8 bits'], sel: ['1813', '1848', '0'], to: ['1813', '3425', '3425'], rate: ['22000 Hz', '0/60/C 4', '3283/0xF4%/0x0C'], name: 'Arp hi pulse #1', w: 372, h: 56,
    art: vlines([93.5, 185.5, 279.5], 56) + wind25() + '<path d="M201 1.500h170v53H201z" fill="none" stroke="#c01425" stroke-width="2"/><path d="M0 55.500h200" stroke="#2b7b38"/>' }
];
const col = (cls, items) => `<div class="${cls}">${items.map((s) => `<span>${s}</span>`).join('')}</div>`;
const icon = (id) => `<svg><use href="#i-${id}"/></svg>`;
$('samples').innerHTML = windows.map((s) => `
<section class="win s${s.n}">
  <div class="title"><span class="dots ${s.live ? 'live' : ''}"></span>${s.t.replace('-', '–')}</div>
  <div class="info">
    <div><div class="filters"><span>Do Filters:</span>${dd('Filters')}</div>
    <div class="ibtns"><button>?</button><button class="pick" aria-label="Select">${icon('ibeam')}</button><button aria-label="Draw">${icon('pencil')}</button><button aria-label="Zoom">${icon('zoom')}</button></div></div>
    ${col('lab', ['Zoom:', 'Size:', 'Amp:'])}${col('val', s.zoom)}
    ${col('lab', ['Selection:', 'Loop:', 'Display:'])}${col('val', s.sel)}
    ${col('lab', s.to.length ? ['to:', 'to:', 'to:'] : [])}${col('val', s.to)}
    ${col('lab', s.rate.length ? ['Rate (c4spd):', 'Real Note:', 'X/Offsets:'] : [])}${col('val', s.rate)}
  </div>
  <div class="name">${dd('Sample')}<span>${s.name}</span></div>
  <svg class="view" style="height:${s.h}px" viewBox="0 0 ${s.w} ${s.h}" preserveAspectRatio="none"><rect width="${s.w}" height="${s.h}"/>${s.art}</svg>
  <div class="grow"></div>
  ${s.live ? '<svg class="pointer" viewBox="0 0 9 13"><path d="M1 1v10l2.500-2 1.500 3.500 1.500-.7L5 8.500h3z" stroke="#fff" stroke-width=".6"/></svg>' : ''}
</section>`).join('');

/* instrument list */
const arp = 'Arp hi pu';
const list = [['kik1', 'combkika'], ['electro', 'combkika'], ['combkik', 'combkika'], ['electro', 'combkika'], ['snarede', 'sn6'], ['snarere', 'sn5'], ['snarerv', 'rvbsn4'], ['snarerv', 'rvbsn3'], ['snarerv', 'rvbsn2'], ['snarevb', 'rvbsn1'], ['snaretic', 'SnaredBE', 1], ['distkikn', 'combkika'], ['sidestic', 'sside'], ['sidest2', 'snaredef'], ['hh1', 'hh1'], ['hh2 clik', 'hh2 clik'], ['', ''], ['open', 'hat'], ['open2', 'open'], ['q', 'q'], ['FW', arp], ['RE', arp, 1], ['FWmello', arp], [' wind', arp], ['wind2', arp, 1], ['RE', arp], ['FWmello', arp, 1], ['FWmello', arp, 1], ['brk sn1', 'kikz+sna'], ['rimshot', 'kikz+sna'], ['klik1', 'SharedBE'], ['btk tigh', 'kikz+sna'], ['big snar', 'kikz+sna', 1], ['kik loop', 'combkika'], ['even', 'heavy'], ['chime1', 'chime1'], ['chime2', 'chime2'], ['mam1', 'mam+gee'], ['mam2', 'mam+gee'], ['mam3', '']];
$('ilist').style.gridTemplateRows = list.map((r) => (r[0] ? 'minmax(0,2fr)' : 'minmax(0,1fr)')).join(' ');
$('ilist').innerHTML = list.map(([a, b, loop], i) => `<div class="irow ${i === 22 ? 'sel' : ''} ${a ? '' : 'plain'}"><div class="tab"></div><div class="ibody"><span>${String(i + 1).padStart(3, '0')}</span><span>${a}</span><small>${b}</small>${loop ? icon('loop') : ''}</div></div>`).join('');

/* mixer */
const levels = { 7: ['#55c860', 22], 8: ['#e7b5e7', 5], 9: ['#d98e5e', 7], 10: ['#1c7426', 10], 11: ['#fbc8fb', 14], 12: ['#fb9413', 18] };
let rows = '';
for (let i = 1; i <= 17; i++) {
  const n = String(i).padStart(3, '0'), m = levels[i];
  rows += `<div class="strip"><b style="background:${colors[i - 1]}">${n}</b><input class="ck" type="checkbox" checked aria-label="Track ${n}"><input class="rg" type="range" value="${i === 2 ? 46 : 92}" aria-label="Volume ${n}"><button class="mute" aria-label="Centre ${n}">=</button><input class="rg" type="range" value="50" aria-label="Pan ${n}"><input class="ck" type="checkbox" aria-label="Solo ${n}"><div class="fx">${`<button aria-label="Effect ${n}"></button>`.repeat(5)}</div><div class="meter">${m ? `<span>${i === 12 ? 'OFF' : '023'}</span><i style="width:${m[1]}px;background:${m[0]}"></i>` : ''}</div></div>`;
}
$('mixer').innerHTML = rows;

/* pattern 4 */
let nums = '';
for (let i = 0; i < 31; i++) nums += `<span class="${i === 22 ? 'now' : ''}">${String(i).padStart(2, '0')}</span>`;
$('p4nums').innerHTML = nums;
const notes = ['G#5', 'G 5', 'F#5', 'F 5', 'E 5', 'D#5', 'D 5', 'C#5', 'C 5', 'B 4', 'A#4', 'A 4', 'G#4', 'G#5', 'G 5', 'F#5', 'F 5', 'E 5', 'D#5'];
$('p4notes').innerHTML = notes.map((n) => `<span>${n}</span>`).join('');
$('p4grid').innerHTML = notes.map((n) => {
  let s = '';
  for (let i = 0; i < 31; i++) s += `<i class="${n[1] === '#' ? (n[2] === '4' ? 'g' : 'c') : (i % 8 < 4 ? 'y' : '')}"></i>`;
  return s;
}).join('');

/* piano roll */
const hits = [[0, 141, '#ccc'], [24, 111, '#c99'], [48, 117, '#276a3a'], [72, 111, '#ddd'], [96, 141, '#e8902c'], [120, 111, '#4fba5c'], [144, 117, '#eee'], [168, 111, '#d98070'], [192, 137, '#456'], [216, 113, '#eee'], [240, 137, '#e5906c'], [264, 113, '#aba'], [288, 137, '#eee'], [312, 113, '#999'], [336, 129, '#386a48'], [360, 127, '#eee']];
$('roll').innerHTML = '<rect width="384" height="192"/><path d="M138 0h6v192h-6z" fill="#f4f4f4"/>' + hits.map(([x, y, c]) => `<path d="M${x} ${y}h6v2h-6z" fill="${c}"/>`).join('');
```
